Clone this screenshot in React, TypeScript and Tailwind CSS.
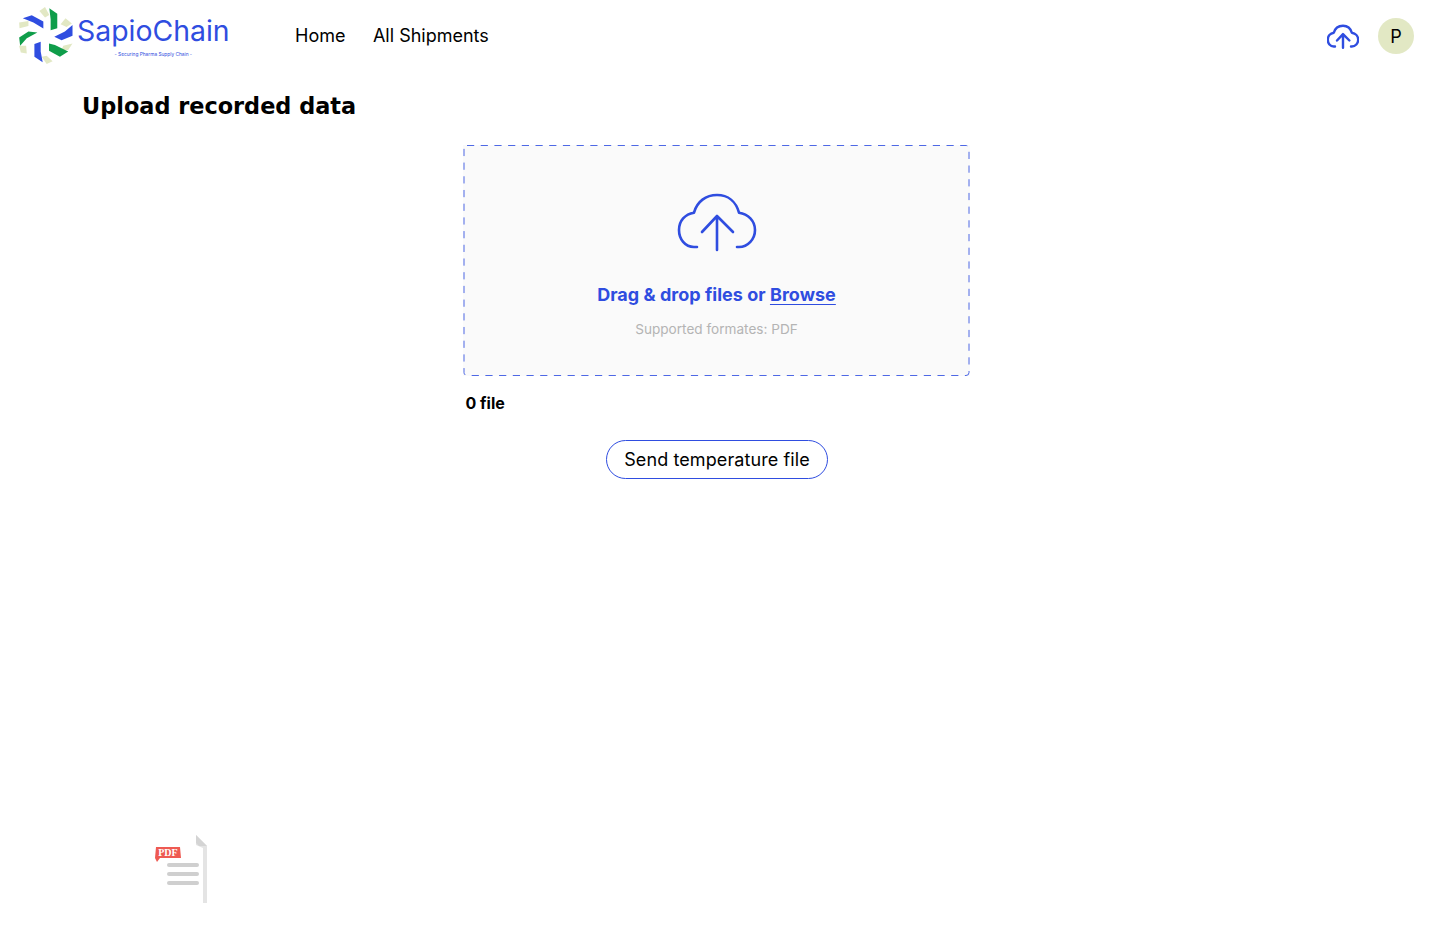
const blades = [
  { fill: '#e2e8c4', points: '118,30 135,18 148,42 135,50' },
  { fill: '#e2e8c4', points: '197,52 216,68 200,78 182,70' },
  { fill: '#e2e8c4', points: '190,135 218,128 205,148 185,148' },
  { fill: '#e2e8c4', points: '125,168 140,165 158,182 140,190' },
  { fill: '#e2e8c4', points: '57,135 78,135 80,158 62,155' },
  { fill: '#e2e8c4', points: '57,65 85,60 85,75 58,82' },
  { fill: '#2f4de0', points: '68,52 95,43 130,62 130,83 100,65' },
  { fill: '#2f4de0', points: '218,72 218,105 185,118 163,108 195,92' },
  { fill: '#2f4de0', points: '103,130 122,123 122,152 128,185 103,168' },
  { fill: '#0f9d4a', points: '148,22 172,38 172,82 152,88 152,55' },
  { fill: '#0f9d4a', points: '147,128 165,133 205,152 180,168 147,150' },
  { fill: '#0f9d4a', points: '57,110 85,92 112,95 80,112 60,135' },
]

function Logo() {
  return (
    <svg width="56" height="57" viewBox="54 18 168 172" className="-mt-[2px] shrink-0">
      {blades.map((blade) => (
        <polygon key={blade.points} fill={blade.fill} points={blade.points} />
      ))}
    </svg>
  )
}

function CloudUpload({ className, strokeWidth }: { className: string; strokeWidth: number }) {
  return (
    <svg viewBox="0 0 80 60" fill="none" stroke="#2f4de0" strokeWidth={strokeWidth} strokeLinecap="round" strokeLinejoin="round" className={className}>
      <path d="M20 55H17C8 55 2 47 2 38C2 29 8 22 17 20.7C20 9.5 29 3 40 3C51 3 59 9.5 62 20.7C71 22 78 29 78 38C78 47 71 55 62 55H60" />
      <path d="M40 58V24M25 40L40 24L56 40" />
    </svg>
  )
}

function PdfIcon() {
  return (
    <svg width="52" height="68" viewBox="0 0 52 68" className="ml-[155px]">
      <path d="M41 0L52 11V68H48V13L41 10Z" fill="#e4e4e4" />
      <path d="M41 0L52 11H44L41 8Z" fill="#d4d4d4" />
      <path d="M1 12H25L26 23H5L2 27L0 23Z" fill="#ee5a52" />
      <text x="13" y="21" textAnchor="middle" fontSize="10" fontWeight="700" fill="#ffffff" fontFamily="'Liberation Serif', serif">PDF</text>
      <rect x="12" y="28" width="32" height="4" rx="2" fill="#cfcfcf" />
      <rect x="12" y="37" width="32" height="4" rx="2" fill="#cfcfcf" />
      <rect x="12" y="46" width="32" height="4" rx="2" fill="#cfcfcf" />
    </svg>
  )
}

export default function App() {
  return (
    <div className="min-h-[936px] bg-white font-['Inter',sans-serif] text-black">
      <header className="flex h-[72px] items-center pl-[18px] pr-[26px]">
        <div className="flex w-[277px] items-center">
          <Logo />
          <div className="-mt-[2px] ml-[3px] flex flex-col items-center">
            <span className="text-[28.4px] leading-[34px] text-[#2f4de0]">SapioChain</span>
            <span className="mt-[3px] text-[4.8px] leading-[6px] text-[#2f4de0]">- Securing Pharma Supply Chain -</span>
          </div>
        </div>
        <nav className="flex gap-[27.5px] text-[18px] leading-[24px]">
          <span>Home</span>
          <span>All Shipments</span>
        </nav>
        <div className="ml-auto flex items-center gap-[19px]">
          <CloudUpload className="h-[25px] w-[32px]" strokeWidth={6} />
          <div className="flex h-[36px] w-[36px] items-center justify-center rounded-full bg-[#e2e8c4] text-[18px]">P</div>
        </div>
      </header>

      <h1 className="ml-[82px] mt-[20px] font-['DejaVu_Sans',sans-serif] text-[22.4px] font-bold leading-[28px]">Upload recorded data</h1>

      <main className="ml-[463px] mt-[25px] flex w-[507px] flex-col">
        <div className="relative flex h-[231px] flex-col items-center bg-[#fafafa] pt-[47px]">
          <svg className="absolute inset-0 h-full w-full" fill="none">
            <rect x="1" y="0.5" width="505" height="230" rx="3" stroke="#2f4de0" strokeOpacity="0.85" strokeDasharray="7.2 6.5" />
          </svg>
          <CloudUpload className="h-[60px] w-[80px]" strokeWidth={2.6} />
          <p className="mt-[31px] text-[18px] font-bold leading-[24px] tracking-[0.03px] text-[#2f4de0]">
            Drag &amp; drop files or <span className="underline decoration-1 underline-offset-[3px]">Browse</span>
          </p>
          <p className="mt-[12px] text-[13.6px] leading-[20px] text-[#b4b4b4]">Supported formates: PDF</p>
        </div>
        <p className="ml-[2.5px] mt-[17px] text-[16px] font-bold leading-[20px]">0 file</p>
        <button className="ml-[1px] mt-[27px] self-center rounded-full border border-[#2f4de0] px-[17px] py-[6px] text-[18px] leading-[25px] tracking-[0.1px]">Send temperature file</button>
      </main>

      <div className="mt-[356px]">
        <PdfIcon />
      </div>
    </div>
  )
}
